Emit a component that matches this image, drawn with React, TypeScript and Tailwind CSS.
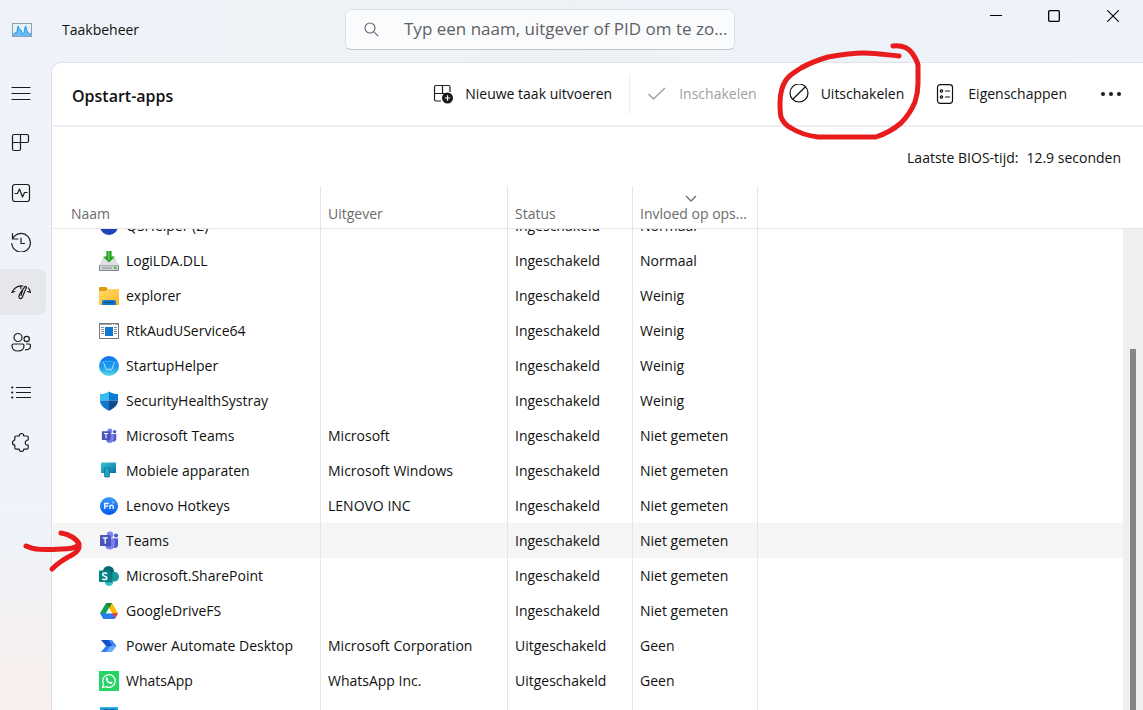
import React from "react";

type Row = { name: string; publisher?: string; status: string; impact: string; icon: React.ReactNode };

const svg20 = "h-5 w-5 shrink-0";

function AppIcon({ children }: { children?: React.ReactNode }) {
  return (
    <svg viewBox="0 0 20 20" className={svg20} aria-hidden="true">
      {children}
    </svg>
  );
}

const QsIcon = (
  <AppIcon>
    <circle cx="10" cy="10" r="9" fill="#1f44b8" />
  </AppIcon>
);

const InstallerIcon = (
  <AppIcon>
    <path d="M3.500 7.500h13L20 14.500H0z" fill="#dfe1e4" />
    <path d="M3.500 7.500h13l.6 1H3z" fill="#c3c6ca" />
    <rect x="0" y="14" width="20" height="6" fill="#83878c" />
    <rect x="1" y="14.500" width="18" height="4.500" fill="#d0d3d6" />
    <path d="M3 17h10" stroke="#9b9fa4" strokeWidth="1.400" />
    <rect x="15" y="15.500" width="2.500" height="2.500" fill="#3fce3f" />
    <path d="M7.400 0h5.200v5.600H16L10 11.600 4 5.600h3.400z" fill="#2a9f27" />
    <path d="M9 0h1.500v9H9z" fill="#5fd04b" />
  </AppIcon>
);

const FolderIcon = (
  <AppIcon>
    <defs>
      <linearGradient id="folderFill" x1="0" y1="0" x2="0.600" y2="1">
        <stop offset="0" stopColor="#ffdc72" />
        <stop offset="1" stopColor="#fdbb28" />
      </linearGradient>
    </defs>
    <path d="M0 2q0-1 1-1h6l2 2h-1v4H0z" fill="#e09a10" />
    <path d="M0 5h6.500L9 3h11v16H0z" fill="url(#folderFill)" />
    <path d="M3 19v-3q0-2 2-2h10q2 0 2 2v3z" fill="#1377c9" />
    <path d="M5.500 16.500h9" stroke="#064b8c" strokeWidth="1" />
  </AppIcon>
);

const WindowIcon = (
  <AppIcon>
    <rect x="0.500" y="2.500" width="19" height="15" fill="#fff" stroke="#76797c" />
    <path d="M1 3.500h18" stroke="#a2a4a7" strokeDasharray="12 1 1 1" />
    <path d="M2 6.500h3M2 8.500h3M2 10.500h3M2 12.500h3M15 6.500h3M15 8.500h3M15 10.500h3M15 12.500h3" stroke="#8b8e91" />
    <rect x="6" y="6" width="8" height="9" fill="#0f79cf" />
  </AppIcon>
);

const HelperIcon = (
  <AppIcon>
    <defs>
      <linearGradient id="helperFill" x1="0" y1="0" x2="0" y2="1">
        <stop offset="0" stopColor="#0d72ea" />
        <stop offset="0.600" stopColor="#1fa0ee" />
        <stop offset="1" stopColor="#5cd9df" />
      </linearGradient>
    </defs>
    <circle cx="10" cy="10" r="10" fill="url(#helperFill)" />
    <path d="M.6 7Q10 3.500 19.400 7" stroke="#45b5f7" strokeWidth="0.800" fill="none" />
    <path d="M4.500 6.500C6 9 6.500 14 8.300 14c.8 0 1-1.200 1.700-1.200s.9 1.200 1.700 1.200c1.800 0 2.300-5 3.800-7.500" stroke="#d3f3ff" strokeWidth="0.900" fill="none" />
  </AppIcon>
);

const ShieldIcon = (
  <AppIcon>
    <path d="M10 0.500C7 2.500 4 3 1 3v6.500h9z" fill="#35bdf0" />
    <path d="M10 0.500C13 2.500 16 3 19 3v6.500h-9z" fill="#0c7bd6" />
    <path d="M1 9.500C1.200 14 5 17.500 10 19.800V9.500z" fill="#0d78d2" />
    <path d="M19 9.500C18.800 14 15 17.500 10 19.800V9.500z" fill="#114b91" />
  </AppIcon>
);

function TeamsIcon({ small }: { small?: boolean }) {
  return (
    <svg viewBox={small ? "-2.600 -2.600 25 25" : "0 0 20 20"} className={svg20} aria-hidden="true">
      <circle cx="17" cy="4.500" r="2.100" fill="#5059c9" />
      <path d="M13.500 7.500H19v6.500q-.5 3-3 3t-2.500-2z" fill="#5059c9" />
      <circle cx="11" cy="3.800" r="3.200" fill="#7b83eb" />
      <path d="M6.500 7.500h9.300v6q-.5 5-5 5t-4.300-4z" fill="#7b83eb" />
      <path d="M7 5.500h5v10H7z" fill="#343b93" opacity="0.700" />
      <rect x="1" y="4" width="10.500" height="11" rx="0.600" fill="#4b53bc" />
      <path d="M3.600 6.800h5.200M6.200 6.800v6" stroke="#fff" strokeWidth="1.300" />
    </svg>
  );
}

const MobileIcon = (
  <AppIcon>
    <defs>
      <linearGradient id="screenFill" x1="0" y1="0" x2="1" y2="1">
        <stop offset="0" stopColor="#34c9d3" />
        <stop offset="1" stopColor="#086ca7" />
      </linearGradient>
    </defs>
    <path d="M2 2.500q0-1 1-1h13q1 0 1 1V12H2z" fill="url(#screenFill)" />
    <rect x="5.500" y="7" width="5" height="9" rx="0.600" fill="#22a5c3" stroke="#0c618c" strokeWidth="0.700" />
  </AppIcon>
);

const FnIcon = (
  <AppIcon>
    <defs>
      <linearGradient id="fnFill" x1="0" y1="0" x2="0" y2="1">
        <stop offset="0" stopColor="#3f9dfb" />
        <stop offset="1" stopColor="#0458ef" />
      </linearGradient>
    </defs>
    <circle cx="10" cy="10" r="9" fill="url(#fnFill)" />
    <path d="M5.800 13V7.500h4M5.800 10.200h3.400M11 13V9M11 11q0-1.800 1.600-1.800T14.200 11v2" stroke="#fff" strokeWidth="1.300" fill="none" />
    <circle cx="14.200" cy="6.500" r="0.900" fill="#a9d2ff" />
  </AppIcon>
);

const SharePointIcon = (
  <AppIcon>
    <circle cx="9.500" cy="5.500" r="5.500" fill="#036c70" />
    <circle cx="15" cy="10.800" r="5" fill="#1a9ba1" />
    <circle cx="10" cy="16" r="4" fill="#37c6d0" />
    <path d="M4 5h9.500v11.500H6z" fill="#035a5e" opacity="0.650" />
    <rect x="0" y="4.500" width="11.500" height="11.500" rx="0.800" fill="#038387" />
    <path d="M8.200 7.700Q7.200 7 5.800 7 3.700 7 3.700 8.600q0 1.100 2 1.600 2.200.5 2.200 1.700 0 1.600-2.300 1.600-1.400 0-2.300-.7" stroke="#fff" strokeWidth="1.500" fill="none" />
  </AppIcon>
);

const DriveIcon = (
  <AppIcon>
    <path d="M7 2h6l-3 5.200L4.200 17 1 12.300z" fill="#12a150" />
    <path d="M7 2h6l6 10.300h-6z" fill="#ffba00" />
    <path d="M7 2h6l-3 5.200z" fill="#188038" />
    <path d="M1 12.300h18L16 17.500q-.4.500-1 .5H5q-.6 0-1-.5z" fill="#2b7df5" />
    <path d="M13 12.300h6L16 17.500z" fill="#ea4335" />
    <path d="M10 7.200l3 5.100H7z" fill="#fff" />
  </AppIcon>
);

const AutomateIcon = (
  <AppIcon>
    <path d="M2 4h9l3 6H7z" fill="#1150c6" />
    <path d="M9.500 4H12q1 0 1.600.7L17.500 10h-4z" fill="#3f86f5" />
    <path d="M7 10l-5 6h7l5.500-6z" fill="#2f7cf2" />
    <path d="M11.500 10h6l-4 5.300q-.6.700-1.500.7H7z" fill="#6aa9fb" />
  </AppIcon>
);

const WhatsAppIcon = (
  <AppIcon>
    <rect width="20" height="20" fill="#25d366" />
    <path d="M3.600 16.500l.9-3.300A6.300 6.300 0 1 1 7 15.600z" fill="none" stroke="#fff" strokeWidth="1.200" />
    <path d="M7.300 6.600c.5-.6 1.100-.4 1.300.1l.5 1.200c.1.400-.5.900-.6 1.100.6 1.100 1.400 1.800 2.500 2.300.3-.2.800-.9 1.100-.8l1.300.7c.4.300.2 1-.2 1.400-.9.800-2.200.5-3.600-.3-1.400-.9-2.400-2.200-2.800-3.500-.2-.9.100-1.700.5-2.200z" fill="#fff" />
  </AppIcon>
);

const StoreIcon = (
  <AppIcon>
    <rect x="1" y="1" width="18" height="18" fill="#1593d6" />
    <path d="M1 1h18v1.500H1z" fill="#2fb4e6" />
    <path d="M5 5V3.500h4V5M11 5V3.500h4V5" stroke="#0b5f9d" fill="none" />
  </AppIcon>
);

const on = "Ingeschakeld";
const off = "Uitgeschakeld";

const rows: Row[] = [
  { name: "QSHelper (2)", status: on, impact: "Normaal", icon: QsIcon },
  { name: "LogiLDA.DLL", status: on, impact: "Normaal", icon: InstallerIcon },
  { name: "explorer", status: on, impact: "Weinig", icon: FolderIcon },
  { name: "RtkAudUService64", status: on, impact: "Weinig", icon: WindowIcon },
  { name: "StartupHelper", status: on, impact: "Weinig", icon: HelperIcon },
  { name: "SecurityHealthSystray", status: on, impact: "Weinig", icon: ShieldIcon },
  { name: "Microsoft Teams", publisher: "Microsoft", status: on, impact: "Niet gemeten", icon: <TeamsIcon small /> },
  { name: "Mobiele apparaten", publisher: "Microsoft Windows", status: on, impact: "Niet gemeten", icon: MobileIcon },
  { name: "Lenovo Hotkeys", publisher: "LENOVO INC", status: on, impact: "Niet gemeten", icon: FnIcon },
  { name: "Teams", status: on, impact: "Niet gemeten", icon: <TeamsIcon /> },
  { name: "Microsoft.SharePoint", status: on, impact: "Niet gemeten", icon: SharePointIcon },
  { name: "GoogleDriveFS", status: on, impact: "Niet gemeten", icon: DriveIcon },
  { name: "Power Automate Desktop", publisher: "Microsoft Corporation", status: off, impact: "Geen", icon: AutomateIcon },
  { name: "WhatsApp", publisher: "WhatsApp Inc.", status: off, impact: "Geen", icon: WhatsAppIcon },
  { name: "", status: "", impact: "", icon: StoreIcon },
];

function Line({ children }: { children: React.ReactNode }) {
  return (
    <svg viewBox="0 0 20 20" className={svg20} fill="none" stroke="currentColor" strokeWidth="1.200" strokeLinecap="round" strokeLinejoin="round" aria-hidden="true">
      {children}
    </svg>
  );
}

const navItems: { label: string; icon: React.ReactNode }[] = [
  { label: "Navigatie openen", icon: <Line><path d="M1 5.500h18M1 11.500h18M1 17.500h18" /></Line> },
  {
    label: "Processen",
    icon: <Line><path d="M3 2.500h13q1.500 0 1.500 1.500V9q0 1.500-1.500 1.500H9.500V17q0 1.500-1.500 1.500H3Q1.500 18.500 1.500 17V4Q1.500 2.500 3 2.500zM9.500 2.500v8M1.500 10.500h8" /></Line>,
  },
  {
    label: "Prestaties",
    icon: <Line><rect x="1.500" y="2.500" width="17" height="17" rx="2.500" /><path d="M4 11.500h2.500L8.500 7l3 8 2-4.500h2.500" /></Line>,
  },
  {
    label: "App-geschiedenis",
    icon: <Line><path d="M1.500 1.500V7H7M1.800 6.500A9.300 9.300 0 1 1 .8 11.500M10 6v5.500h3.500" /></Line>,
  },
  {
    label: "Opstart-apps",
    icon: (
      <Line>
        <path d="M.8 10.500Q3.500 4.500 9.500 3.800l2.500.2M.8 10.500l3-1M9.800 4v2.500M17.500 6q1.400 2 2 4.500l-3-1M14 4.600Q9.500 10 8 13.800q-.3 2.300 1.200 2.800 1.600.3 2.400-1.800Q13.500 10 15.500 5.300q0-1.300-1.500-.7zM11.600 8.500l-1.600 5" />
      </Line>
    ),
  },
  {
    label: "Gebruikers",
    icon: <Line><circle cx="7" cy="5.500" r="4" /><circle cx="15.700" cy="7" r="2.700" /><path d="M2.500 12h9q1.500 0 1.500 1.500 0 5.500-6 5.500T1 13.500Q1 12 2.500 12zM15.500 12H18q1.500 0 1.500 1.500 0 4.500-5 4.300" /></Line>,
  },
  {
    label: "Details",
    icon: <Line><path d="M5.500 5.500H19.500M5.500 10.500H19.500M5.500 15.500H19.500" /><path d="M1.200 5.500h.1M1.200 10.500h.1M1.200 15.500h.1" strokeWidth="2.200" /></Line>,
  },
  {
    label: "Services",
    icon: <Line><path d="M5 4h3.200Q8.300 1.500 10.500 1.500t2.300 2.500H16q1.200 0 1.200 1.200V8q-2.900.1-2.900 2.700t2.900 2.500V16q0 1.200-1.200 1.200h-3.200q-.1 2.300-2.300 2.300t-2.300-2.300H5q-1.200 0-1.200-1.200v-2.800Q1.500 12.900 1.500 10.700T3.800 8V5.200Q3.800 4 5 4z" /></Line>,
  },
];

const toolButton = "relative flex h-full items-center gap-3 whitespace-nowrap px-4";

export default function App() {
  return (
    <div className="flex h-screen flex-col overflow-hidden bg-gradient-to-b from-[#eff3fa] from-75% to-[#faf0ed] font-['Open_Sans','Noto_Sans',sans-serif] text-sm text-[#111]">
      <header className="flex h-[62px] shrink-0 items-start bg-gradient-to-r from-[#eff3f9] via-[#ecf2f6] to-[#eff3fb]">
        <div className="flex h-[59px] w-[345px] shrink-0 items-center pl-3">
          <svg viewBox="0 0 20 14" className="h-[14px] w-5" aria-hidden="true">
            <rect x="0.500" y="0.500" width="19" height="13" fill="#e4f1fa" stroke="#8fa0ae" />
            <path d="M1 11.500l2-2 1.500 1L6 3l1.500 3L9 7l1.500 4 1.500-1 1-6 .8-1L15 8l2 2.500 2 .5v2H1z" fill="#66bdf3" />
            <path d="M1 11.500l2-2 1.500 1L6 3l1.500 3L9 7l1.500 4 1.500-1 1-6 .8-1L15 8l2 2.500 2 .5" fill="none" stroke="#1c88da" strokeWidth="0.800" />
          </svg>
          <h1 className="pl-[30px]">Taakbeheer</h1>
        </div>
        <label className="mt-[9px] flex h-[41px] w-[390px] items-center rounded-md border border-[#dde2e8] border-b-[#c3c7cc] bg-[#fafbfd] pl-[18px] text-[#5f6164]">
          <svg viewBox="0 0 16 16" className="h-4 w-4 shrink-0" fill="none" stroke="currentColor" strokeWidth="1.100" aria-hidden="true">
            <circle cx="6" cy="6" r="5" />
            <path d="M9.700 9.700l4.500 4.500" />
          </svg>
          <input aria-label="Zoeken" placeholder="Typ een naam, uitgever of PID om te zo..." className="ml-6 min-w-0 flex-1 bg-transparent text-[17px] outline-none placeholder:text-[#5f6164]" />
        </label>
        <div className="ml-auto flex h-8 text-black">
          <button aria-label="Minimaliseren" className="flex w-[58px] items-center justify-center">
            <svg viewBox="0 0 12 12" className="h-3 w-3" stroke="currentColor" fill="none"><path d="M0 5.500h12" /></svg>
          </button>
          <button aria-label="Maximaliseren" className="flex w-[58px] items-center justify-center">
            <svg viewBox="0 0 12 12" className="h-3 w-3" stroke="currentColor" strokeWidth="1.300" fill="none"><rect x="0.700" y="0.700" width="10.600" height="10.600" rx="1" /></svg>
          </button>
          <button aria-label="Sluiten" className="flex w-[60px] items-center justify-center">
            <svg viewBox="0 0 12 12" className="h-3 w-3" stroke="currentColor" strokeWidth="1.100" fill="none"><path d="M.3.300l11.400 11.400M11.700.300L.3 11.700" /></svg>
          </button>
        </div>
      </header>

      <div className="flex min-h-0 flex-1">
        <nav aria-label="Hoofdmenu" className="flex w-[51px] shrink-0 flex-col gap-1 pt-[7px] text-[#1c1c1c]">
          {navItems.map((item) => (
            <button
              key={item.label}
              aria-label={item.label}
              className={
                item.label === "Opstart-apps"
                  ? "flex h-[46px] w-[46px] shrink-0 items-center rounded-r-md bg-[#e7e8ec] pl-[11px]"
                  : "flex h-[46px] w-[46px] shrink-0 items-center pl-[11px]"
              }
            >
              {item.icon}
            </button>
          ))}
        </nav>

        <main className="min-w-0 flex-1 rounded-tl-[10px] border-l border-t border-[#dfe3e9] bg-white pl-px">
          <div className="flex h-16 items-center border-b-2 border-[#eceff3] pl-[19px]">
            <h2 className="pt-1 text-base font-semibold">Opstart-apps</h2>
            <div className="ml-auto flex h-full items-center pr-1">
              <button className={toolButton}>
                <svg viewBox="0 0 20 20" className={svg20} fill="none" stroke="#1f1f1f" strokeWidth="1.200" aria-hidden="true">
                  <path d="M8 17H3q-1.500 0-1.500-1.500V3Q1.500 1.500 3 1.500h12.500Q17 1.500 17 3v5M9.500 1.500v8M1.500 9.500H17" />
                  <circle cx="14.500" cy="14" r="5.500" fill="#1a1a1a" stroke="none" />
                  <path d="M14.500 11.300v5.400M11.800 14h5.400" stroke="#fff" />
                </svg>
                Nieuwe taak uitvoeren
              </button>
              <span className="mx-px h-10 w-px bg-[#ececec]" />
              <button disabled className={`${toolButton} text-[#a0a0a0]`}>
                <svg viewBox="0 0 20 20" className={svg20} fill="none" stroke="currentColor" strokeWidth="1.500" aria-hidden="true">
                  <path d="M1.500 10l5 5L18 4" />
                </svg>
                Inschakelen
              </button>
              <button className={toolButton}>
                <Line>
                  <circle cx="10" cy="9" r="9" />
                  <path d="M16.200 3L4 15" />
                </Line>
                Uitschakelen
                <svg viewBox="770 40 155 105" className="pointer-events-none absolute -left-[2px] -top-[23px] h-[105px] w-[155px]" fill="none" stroke="#e81c1c" strokeWidth="5" strokeLinecap="round" strokeLinejoin="round" aria-hidden="true">
                  <path d="M898 56C888 55 874 53 863 53C850 53 838 55 827 57C817 60 807 64 800 68C794 72 788 75 785 80C781 86 779 95 779 103C779 109 779 113 780 117C782 122 786 126 790 128C798 133 808 136 817 137H875C884 134 893 129 900 123C905 118 911 109 914 102C916 96 917 90 917 83V65C916 60 913 56 911 53C908 49 902 45 892 46" />
                </svg>
              </button>
              <button className={toolButton}>
                <Line>
                  <rect x="1.500" y="0.600" width="15" height="18.800" rx="2.800" />
                  <circle cx="5.500" cy="7" r="1.200" />
                  <circle cx="5.500" cy="13" r="1.200" />
                  <path d="M9.500 7H13.500M9.500 13H13.500" />
                </Line>
                Eigenschappen
              </button>
              <button aria-label="Meer opties" className="flex h-full items-center px-[17px]">
                <svg viewBox="0 0 22 6" className="h-[6px] w-[22px]" fill="#1a1a1a" aria-hidden="true">
                  <circle cx="3" cy="3" r="2" /><circle cx="11" cy="3" r="2" /><circle cx="19" cy="3" r="2" />
                </svg>
              </button>
            </div>
          </div>

          <p className="flex h-[59px] items-center justify-end gap-2 pr-[22px] pt-0.5">
            <span>Laatste BIOS-tijd:</span>
            <span>12.9 seconden</span>
          </p>

          <div className="relative">
            <table className="w-full table-fixed border-separate border-spacing-0 text-left">
              <colgroup>
                <col className="w-[268px]" />
                <col className="w-[187px]" />
                <col className="w-[125px]" />
                <col className="w-[125px]" />
                <col />
              </colgroup>
              <thead className="text-[#6b6b6b]">
                <tr className="h-[43px] align-bottom">
                  <th className="border-b border-r border-[#e5e5e5] pb-1 pl-[18px] font-normal">Naam</th>
                  <th className="border-b border-r border-[#e5e5e5] pb-1 pl-[7px] font-normal">Uitgever</th>
                  <th className="border-b border-r border-[#e5e5e5] pb-1 pl-[7px] font-normal">Status</th>
                  <th className="border-b border-r border-[#e5e5e5] pb-1 pl-[7px] pr-4 font-normal" aria-sort="descending">
                    <svg viewBox="0 0 12 7" className="mx-auto mb-0.5 h-[7px] w-3" fill="none" stroke="currentColor" strokeWidth="1.300" aria-hidden="true">
                      <path d="M1 1l5 5 5-5" />
                    </svg>
                    <span className="block whitespace-nowrap">Invloed op ops...</span>
                  </th>
                  <td className="border-b border-[#e5e5e5]" />
                </tr>
              </thead>
              <tbody>
                {rows.map((row, index) => {
                  const clip = index === 0 ? "flex h-[14px] items-end overflow-hidden" : "flex h-[35px] items-center";
                  const inner = "flex h-[35px] shrink-0 items-center whitespace-nowrap";
                  const selected = row.name === "Teams";
                  return (
                    <tr key={row.name || "next"} className={selected ? "bg-[#f5f5f5]" : ""}>
                      <td className="border-r border-[#e5e5e5] p-0">
                        <div className={selected ? `${clip} relative` : clip}>
                          <span className={`${inner} gap-[7px] pl-[46px]`}>
                            {row.icon}
                            {row.name}
                          </span>
                          {selected && (
                            <svg viewBox="20 525 70 50" className="pointer-events-none absolute -left-[33px] top-[2px] h-[50px] w-[70px]" fill="none" stroke="#e81c1c" strokeWidth="5" strokeLinecap="round" strokeLinejoin="round" aria-hidden="true">
                              <path d="M26 546C34 550 43 550 62 549C70 549 75 548 79 545M61 533C69 534 77 539 79 544C80 550 76 553 72 555C64 559 58 563 52 569" />
                            </svg>
                          )}
                        </div>
                      </td>
                      {[row.publisher, row.status, row.impact].map((text, i) => (
                        <td key={i} className="border-r border-[#e5e5e5] p-0 pl-[7px]">
                          <div className={clip}>
                            <span className={inner}>{text}</span>
                          </div>
                        </td>
                      ))}
                      <td className="p-0" />
                    </tr>
                  );
                })}
              </tbody>
            </table>
            <div className="absolute bottom-0 right-0 top-[43px] w-5 bg-[#efefef] pl-[7px] pt-[120px]">
              <div className="h-full w-[6px] bg-[#858585]" />
            </div>
          </div>
        </main>
      </div>
    </div>
  );
}
